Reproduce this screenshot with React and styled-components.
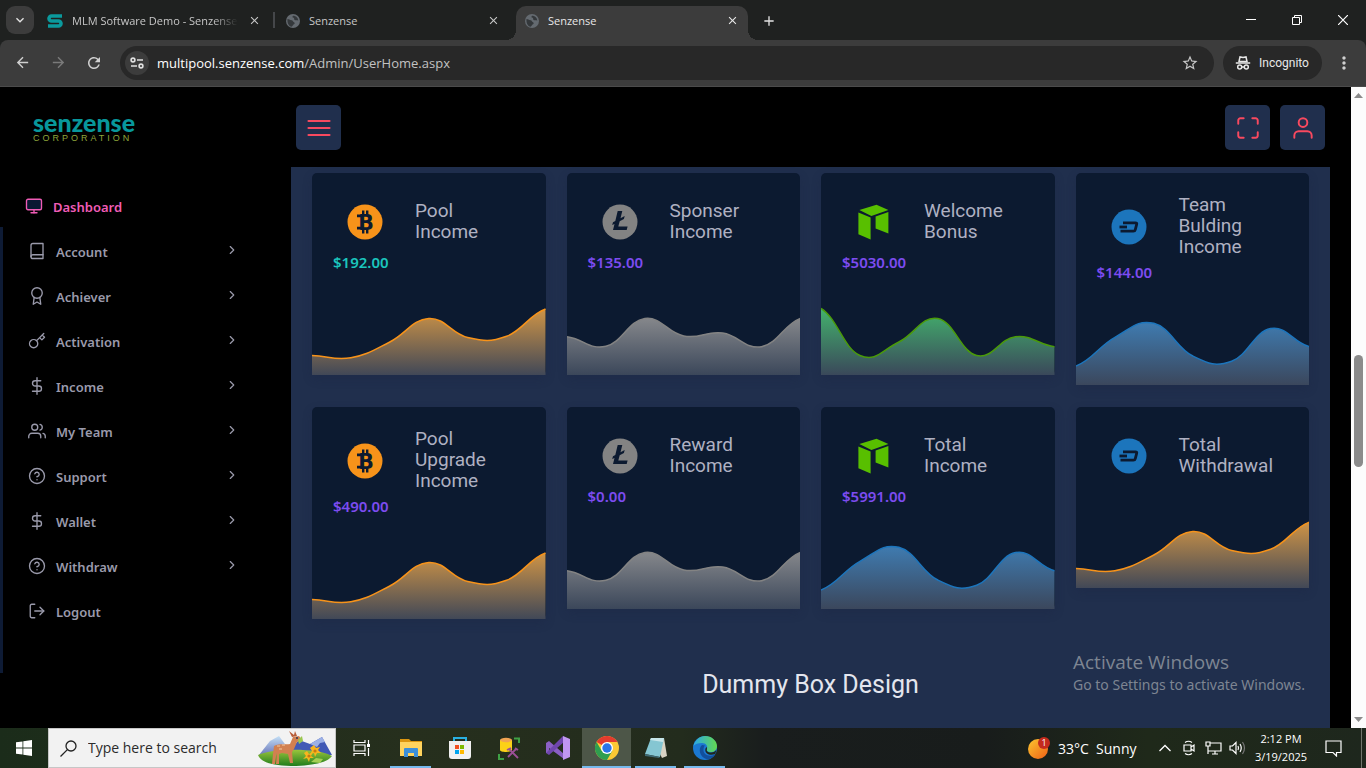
import React from 'react';
import styled, { createGlobalStyle } from 'styled-components';
import {
  FiAward, FiBook, FiChevronRight, FiDollarSign, FiHelpCircle, FiKey, FiLogOut,
  FiMaximize, FiMenu, FiMonitor, FiUser, FiUsers,
} from 'react-icons/fi';
import {
  MdArrowBack, MdArrowForward, MdRefresh, MdStarBorder, MdMoreVert, MdClose, MdAdd,
  MdKeyboardArrowDown,
} from 'react-icons/md';

const GlobalStyle = createGlobalStyle`
  * { box-sizing: border-box; }
  body { margin: 0; background: #000; font-family: 'Noto Sans', sans-serif; }
  button { border: 0; padding: 0; background: none; color: inherit; font: inherit; }
  a { color: inherit; text-decoration: none; }
  svg { display: block; flex: none; }
`;

const ui = "'Open Sans', 'Noto Sans', sans-serif";

const Screen = styled.div`
  height: 100vh;
  display: flex;
  flex-direction: column;
  overflow: hidden;
`;

/* ---------- browser ---------- */

const TabStrip = styled.div`
  height: 40px;
  flex: none;
  display: flex;
  align-items: flex-end;
  background: #1f2120;
  color: #e3e3e3;
  font: 11px/16px ${ui};
`;

const TabSearch = styled.button`
  width: 28px;
  height: 28px;
  margin: 6px 4px 6px 6px;
  border-radius: 9px;
  background: #3c3c3c;
  display: grid;
  place-items: center;
`;

const Tab = styled.div`
  width: 232px;
  height: 34px;
  margin-right: 7px;
  padding: 0 8px 5px 9px;
  display: flex;
  align-items: center;
  position: relative;
  color: ${(p) => (p.$active ? '#e8e8e8' : '#c7c7c7')};
  background: ${(p) => (p.$active ? '#3c3c3c' : 'transparent')};
  border-radius: 10px 10px 0 0;

  &::before, &::after {
    content: '';
    display: ${(p) => (p.$active ? 'block' : 'none')};
    position: absolute;
    bottom: 0;
    width: 10px;
    height: 10px;
  }
  &::before { left: -10px; background: radial-gradient(circle at 0 0, transparent 10px, #3c3c3c 10px); }
  &::after { right: -10px; background: radial-gradient(circle at 100% 0, transparent 10px, #3c3c3c 10px); }
`;

const TabTitle = styled.span`
  flex: 1;
  margin-left: 9px;
  overflow: hidden;
  white-space: nowrap;
  ${(p) => p.$fade && 'mask-image: linear-gradient(90deg, #000 85%, transparent);'}
`;

const TabClose = styled.button`
  width: 16px;
  height: 16px;
  margin-left: 8px;
  display: grid;
  place-items: center;
`;

const TabDivider = styled.div`
  width: 2px;
  height: 16px;
  margin: 0 0 12px -4px;
  background: #45474a;

  & + div { margin-left: 2px; }
`;

const NewTab = styled.button`
  width: 28px;
  height: 34px;
  padding-bottom: 5px;
  display: grid;
  place-items: center;
`;

const WindowButtons = styled.div`
  margin-left: auto;
  align-self: stretch;
  display: flex;
`;

const WindowButton = styled.button`
  width: 46px;
  display: grid;
  place-items: center;
`;

const ToolbarBack = styled.div`
  flex: none;
  background: #1f2120;
`;

const Toolbar = styled.div`
  height: 47px;
  padding: 0 8px 1px 8px;
  display: flex;
  align-items: center;
  background: #3c3c3c;
  border-bottom: 1px solid #4b4b4b;
  border-radius: 8px 8px 0 0;
  color: #c7c7c7;
`;

const NavButton = styled.button`
  width: 28px;
  height: 28px;
  margin-right: 8px;
  display: grid;
  place-items: center;
  color: ${(p) => (p.disabled ? '#7a7a7a' : '#d0d0d0')};

  &:last-child { margin-right: 0; }
`;

const Omnibox = styled.div`
  flex: 1;
  height: 34px;
  margin: 0 9px 0 4px;
  padding: 0 15px 0 5px;
  display: flex;
  align-items: center;
  background: #282828;
  border-radius: 17px;
`;

const SiteInfo = styled.button`
  width: 24px;
  height: 24px;
  border-radius: 12px;
  background: #3c3c3c;
  display: grid;
  place-items: center;
`;

const Address = styled.div`
  flex: 1;
  margin-left: 8px;
  color: #c2c2c2;
  font: 13px/20px ${ui};

  b { color: #fff; font-weight: 400; }
`;

const Incognito = styled.button`
  width: 99px;
  height: 34px;
  padding-left: 12px;
  margin-right: 8px;
  display: flex;
  align-items: center;
  gap: 8px;
  border-radius: 17px;
  background: #282828;
  color: #e8e8e8;
  font: 12px/18px Roboto, sans-serif;
`;

/* ---------- site ---------- */

const Viewport = styled.div`
  flex: 1;
  min-height: 0;
  display: flex;
  position: relative;
  background: #000;
`;

const Sidebar = styled.aside`
  width: 291px;
  flex: none;
`;

const Logo = styled.a`
  height: 98px;
  padding: 23px 0 0 33px;
  display: flex;
  flex-direction: column;
  color: #08979b;
  font: 900 25px/24px Lato, sans-serif;

  small {
    color: #8ea63c;
    font: 9px/8px 'Liberation Sans', sans-serif;
    letter-spacing: 3px;
  }
`;

const MenuLink = styled.a`
  height: 45px;
  padding: 0 52px 2px 25px;
  display: flex;
  align-items: center;
  color: ${(p) => (p.$active ? '#f05cb6' : '#9a9aab')};
  font: 600 13px/20px 'Noto Sans', sans-serif;

  svg { margin: 0 10px 2px 0; stroke-width: 1.8; }
  svg:last-child { margin: 0 0 3px auto; stroke-width: 2; }
`;

const MenuGroup = styled.nav`
  margin-top: -3px;
  padding: 3px 0 38px;
  border-left: 3px solid #0e1b35;
`;

const Main = styled.main`
  flex: 1;
  margin-right: 21px;
  display: flex;
  flex-direction: column;
`;

const TopBar = styled.header`
  height: 80px;
  flex: none;
  padding: 18px 5px;
  display: flex;
  gap: 10px;
`;

const SquareButton = styled.button`
  width: 45px;
  height: 45px;
  border-radius: 5px;
  background: #202f4d;
  color: #f9495f;
  display: grid;
  place-items: center;

  &:first-child { margin-right: auto; }
  svg { stroke-width: 1.8; }
`;

const Panel = styled.section`
  flex: 1;
  min-height: 0;
  padding: 6px 21px 0;
  background: #202f4d;
`;

const Cards = styled.div`
  display: grid;
  grid-template-columns: repeat(4, 1fr);
  gap: 22px 21px;
  align-items: start;
`;

const Card = styled.article`
  background: #0c1a30;
  border-radius: 5px;
  box-shadow: 0 4px 10px rgba(26, 38, 66, 0.3);
`;

const CardHead = styled.div`
  min-height: 77px;
  padding: 21px 21px 0 35px;
  display: flex;
  align-items: center;
  gap: 32px;
`;

const CardTitle = styled.h3`
  margin: 0;
  padding-bottom: 3px;
  flex: 1;
  color: #afb1c2;
  font: 400 19px/21px Roboto, sans-serif;
`;

const Amount = styled.p`
  margin: 2px 0 -2px;
  padding-left: 21px;
  color: ${(p) => p.$color};
  font: 600 15px/21px 'Noto Sans', sans-serif;
`;

const ChartBox = styled.div`
  margin-top: 4px;

  svg { width: 100%; height: 100px; }
`;

const SectionTitle = styled.h2`
  margin: 51px 0 0;
  text-align: center;
  color: #e4e6ee;
  font: 400 25px/30px Roboto, sans-serif;
`;

const Watermark = styled.div`
  position: absolute;
  right: 56px;
  bottom: 33px;
  width: 237px;
  color: #7d8592;
  font: 14px/20px 'Noto Sans', sans-serif;
  white-space: nowrap;

  strong { display: block; font: 400 19px/25px ${ui}; }
`;

const Scrollbar = styled.div`
  width: 15px;
  padding: 6px 0 6px;
  flex: none;
  display: flex;
  flex-direction: column;
  align-items: center;
  background: #fcfcfc;
`;

const Track = styled.div`
  flex: ${(p) => p.$size} 1 0;
`;

const Thumb = styled(Track)`
  width: 9px;
  border-radius: 5px;
  background: #8b8b8b;
`;

/* ---------- taskbar ---------- */

const Taskbar = styled.footer`
  height: 40px;
  flex: none;
  display: flex;
  background: linear-gradient(90deg, #1b2c1a 0, #262f1d 30%, #232c1d 50%, #191d1d 56%, #181c1b 72%, #1f291a 84%, #1e271d 100%);
  color: #fff;
  font-family: ${ui};
`;

const TaskButton = styled.button`
  width: ${(p) => p.$width || 49}px;
  position: relative;
  display: grid;
  place-items: center;
  background: ${(p) => (p.$on ? '#4d5648' : 'transparent')};

  &::after {
    content: '';
    display: ${(p) => (p.$open ? 'block' : 'none')};
    position: absolute;
    bottom: 0;
    left: ${(p) => (p.$on ? 0 : 4)}px;
    right: ${(p) => (p.$on ? 0 : 4)}px;
    height: 2px;
    background: #76b9ed;
  }
`;

const SearchBox = styled.label`
  width: 288px;
  margin-right: 1px;
  padding: 0 2px 0 11px;
  display: flex;
  align-items: center;
  background: #f2f2f2;
  border: 1px solid #c6c6c6;
`;

const SearchInput = styled.input`
  flex: 1;
  min-width: 0;
  margin-left: 11px;
  padding: 0;
  border: 0;
  outline: 0;
  background: none;
  font: 14px/20px ${ui};

  &::placeholder { color: #2b2b2b; opacity: 1; }
`;

const Tray = styled.div`
  margin-left: auto;
  display: flex;
  align-items: center;
`;

const Weather = styled.button`
  width: 125px;
  display: flex;
  align-items: center;
  gap: 6px;
  font-size: 14px;
  white-space: pre;
`;

const TrayButton = styled.button`
  width: 24px;
  display: grid;
  place-items: center;
`;

const Clock = styled.button`
  width: 64px;
  font-size: 11px;
  line-height: 18px;
`;

const Notifications = styled.button`
  width: 40px;
  height: 40px;
  display: grid;
  place-items: center;
`;

const ShowDesktop = styled.button`
  width: 5px;
  height: 40px;
  margin-left: 8px;
  border-left: 1px solid #70766d;
`;

/* ---------- drawings ---------- */

const Globe = () => (
  <svg width="14" height="14" viewBox="0 0 14 14">
    <circle cx="7" cy="7" r="7" fill="#646a70" />
    <path d="M1.500 5C3 5 4 6.500 6 6.200c1 .3.800 1.600 2 2 1 .5 1 1.800-.5 2.300-.8 1-1 1.800-2 2.300C3 12 1 9.500 1.500 5zM7 1.800c-1 1.200-.5 2.200.8 2 .8.800-.2 1.800 1.200 2.400 1.200.4 2.200-.2 3.200.6C12.300 4 10 1.800 7 1.800z" fill="#34383b" />
  </svg>
);

const SenzenseMark = () => (
  <svg width="16" height="14" viewBox="0 0 16 14">
    <path d="M15 2H4.500a2.400 2.400 0 0 0 0 5h7a2.400 2.400 0 0 1 0 5H1" fill="none" stroke="#0b9a9d" strokeWidth="3.600" />
  </svg>
);

const SiteInfoIcon = () => (
  <svg width="14" height="12" viewBox="0 0 14 12" fill="none" stroke="#e0e0e0" strokeWidth="1.600">
    <circle cx="3" cy="3" r="1.900" />
    <path d="M7 3h6M1 9h6" />
    <circle cx="11" cy="9" r="1.900" />
  </svg>
);

const IncognitoIcon = () => (
  <svg width="16" height="16" viewBox="0 0 16 16" fill="none" stroke="#e8e8e8" strokeWidth="1.500">
    <path d="M4 6.500 5 2l3 .6L11 2l1 4.500z" />
    <path d="M.8 8h14.400" />
    <circle cx="4.700" cy="12" r="2" />
    <circle cx="11.300" cy="12" r="2" />
    <path d="M6.700 12h2.600" />
  </svg>
);

const BitcoinIcon = () => (
  <svg width="36" height="36" viewBox="0 0 36 36">
    <circle cx="18" cy="18" r="17.500" fill="#f7931a" />
    <g fill="#0c1a30">
      <path d="M15 6.500h2.400V12H15zM19 6.500h2.400V12H19zM15 24h2.400v5.500H15zM19 24h2.400v5.500H19z" />
      <path d="M10 10.500h5v2.800h-5zM10 22.700h5v2.800h-5z" />
      <text x="19" y="25.500" textAnchor="middle" fontFamily="DejaVu Sans" fontWeight="700" fontSize="20.500">B</text>
    </g>
  </svg>
);

const LitecoinIcon = () => (
  <svg width="36" height="36" viewBox="0 0 36 36">
    <circle cx="18" cy="18" r="17.500" fill="#838383" />
    <path d="M15.700 7h4.600l-1.800 7.200 4.200-2.200-.8 3-4.200 2.200-1.400 5.300h9.300L24.700 26H11l1.500-6-2.300 1.100.8-2.900 2.300-1.200z" fill="#0c1a30" />
  </svg>
);

const NeoIcon = () => (
  <svg width="36" height="36" viewBox="0 0 36 36" fill="#58bf00">
    <path d="M3.400 6 20.500.8 32.400 6 15.400 12z" />
    <path d="M2.400 8.600 14.600 13.400V35.600L2.400 30.200z" />
    <path d="M19.600 12.400 32.400 8v21.600L19.600 24.400z" />
  </svg>
);

const DashIcon = () => (
  <svg width="36" height="36" viewBox="0 0 36 36">
    <circle cx="18" cy="18" r="17.500" fill="#1c75bc" />
    <g fill="none" stroke="#0c1a30" strokeWidth="2.800">
      <path d="M12 13.800h12.500q1.600 0 1.200 1.400l-1.400 5.400q-.4 1.600-2 1.600H9.500" />
      <path d="M8.500 18h7.500" />
    </g>
  </svg>
);

const StartIcon = () => (
  <svg width="16" height="16" viewBox="0 0 16 16" fill="#fff">
    <path d="M0 2.300 6.500 1.400v6.200H0zM7.300 1.300 16 0v7.600H7.300zM0 8.400h6.500v6.200L0 13.700zM7.300 8.400H16V16l-8.700-1.300z" />
  </svg>
);

const SearchIcon = () => (
  <svg width="17" height="17" viewBox="0 0 17 17" fill="none" stroke="#222" strokeWidth="1.300">
    <circle cx="11" cy="6" r="5" />
    <path d="M7.400 9.600.5 16.500" />
  </svg>
);

const DeerScene = () => (
  <svg width="76" height="38" viewBox="0 0 76 38">
    <defs>
      <linearGradient id="hill" x1="0" y1="0" x2="0" y2="1">
        <stop offset="0" stopColor="#9ac43c" />
        <stop offset="1" stopColor="#1f7d1d" />
      </linearGradient>
      <linearGradient id="peak" x1="0" y1="0" x2="0" y2="1">
        <stop offset="0" stopColor="#c4e0f6" />
        <stop offset="1" stopColor="#6b77ba" />
      </linearGradient>
    </defs>
    <path d="M2 26 13 12l9-5 14 19z" fill="url(#peak)" />
    <path d="M28 26 42 11l11 4 12-7 10 18z" fill="#4159b5" />
    <path d="m53 15 12-7 3 5-5 1-3 4z" fill="#9cb1e6" />
    <path d="M1 26c16-7 60-7 74 1-4 6-16 9-36 10C17 37 4 34 1 26z" fill="url(#hill)" />
    <path d="M17 17c6-3 12-1 16-2l3-7 6-1 3 4-5 2-3 7-2 3 1 11h-3l-2-9-6-1-3 1 0 10h-3l1-11-1 3-1 8h-3l1-10z" fill="#d28050" />
    <path d="m35 8-3-6 5 4 1-4 2 5z" fill="#b85e3b" />
    <path d="M20 17h3M25 16h3M22 20h3" stroke="#f2c9a0" />
    <circle cx="40" cy="9" r="1" fill="#2b3454" />
    <path d="m41 11 4-4 1 5-4 3z" fill="#9ac750" />
    <g fill="#f8b51e">
      <path d="m50 22 2 3 4-2-2 4 3 2-4 0-1 4-2-4-4 1 3-3-2-3z" />
      <path d="m57 16 2 3 4-1-2 3 3 3-4 0-2 4-1-4-4 1 2-3-2-3z" />
    </g>
    <circle cx="52" cy="27" r="1.600" fill="#c87a12" />
    <circle cx="58" cy="22" r="1.600" fill="#c87a12" />
    <path d="m54 33 5-4 7 1-3 4z" fill="#a4cf55" />
  </svg>
);

const TaskViewIcon = () => (
  <svg width="18" height="16" viewBox="0 0 18 16" fill="none" stroke="#fff" strokeWidth="1.200">
    <path d="M1 0v2.500h11V0M1 16v-2.500h11V16M1 5h11v6H1zM15.500 0v4M15.500 8v8" />
    <path d="M14 4h3v3h-3z" fill="#fff" stroke="none" />
  </svg>
);

const ExplorerIcon = () => (
  <svg width="22" height="20" viewBox="0 0 22 20">
    <path d="M0 1h9l2 2h11v3H0z" fill="#dc9610" />
    <path d="M0 4h22v14H0z" fill="#ffd35e" />
    <path d="M4 19v-8q0-1 1-1h12q1 0 1 1v8h-4v-4H8v4z" fill="#3c8fd9" />
  </svg>
);

const StoreIcon = () => (
  <svg width="24" height="24" viewBox="0 0 24 24">
    <path d="M6 6V2h12v4" fill="none" stroke="#29b0e2" strokeWidth="2" />
    <path d="M1 5h22v15q0 3-3 3H4q-3 0-3-3z" fill="#f1f1f1" />
    <path d="M7 9h4v4H7z" fill="#f25022" />
    <path d="M12 9h4v4h-4z" fill="#7fba00" />
    <path d="M7 14h4v4H7z" fill="#00a4ef" />
    <path d="M12 14h4v4h-4z" fill="#ffb900" />
  </svg>
);

const SqlIcon = () => (
  <svg width="22" height="23" viewBox="0 0 22 23">
    <path d="M2 3v10c0 2.600 12 2.600 12 0V3z" fill="#fcd116" />
    <ellipse cx="8" cy="3" rx="6" ry="2.200" fill="#f0a452" />
    <path d="M16 1.500h5V6M1 17v5h5" fill="none" stroke="#3fa045" strokeWidth="2" />
    <path d="m10 20 8-8M11 12l9 9M9 13l4-2M17 11l3 2" stroke="#9b4f96" strokeWidth="1.800" />
  </svg>
);

const VisualStudioIcon = () => (
  <svg width="24" height="24" viewBox="0 0 24 24">
    <path d="m0 7 3-2L18 18v5L3 12v5l-3 0z" fill="#8a5fc4" />
    <path d="M0 17 17 0l1 6L3 19z" fill="#6f46ad" />
    <path d="m17 0 7 3v18l-7 3z" fill="#c196f2" />
  </svg>
);

const ChromeIcon = () => (
  <svg width="24" height="24" viewBox="0 0 24 24">
    <circle cx="12" cy="12" r="12" fill="#fcc934" />
    <path d="M12 12 1.600 6A12 12 0 0 1 22.400 6H12z" fill="#e33b2e" />
    <path d="M1.600 6A12 12 0 0 0 12 24l5.200-9L12 12 6.800 15z" fill="#2f9e4f" />
    <circle cx="12" cy="12" r="6" fill="#fff" />
    <circle cx="12" cy="12" r="4.700" fill="#2a74e8" />
  </svg>
);

const NotepadIcon = () => (
  <svg width="24" height="22" viewBox="0 0 24 22">
    <path d="M8 1h12l3 18-5 2z" fill="#d9d4c4" />
    <path d="M7 1h13l-4 19-15-3z" fill="#85c6d2" />
    <path d="M7 1h13l-1 4-13-2z" fill="#c7e6ea" />
    <path d="m1 17 15 3-1 1-14-2z" fill="#3f6a74" />
  </svg>
);

const EdgeIcon = () => (
  <svg width="24" height="24" viewBox="0 0 24 24">
    <defs>
      <linearGradient id="edgeTop">
        <stop offset="0" stopColor="#2aa7e8" />
        <stop offset="1" stopColor="#63d94f" />
      </linearGradient>
    </defs>
    <circle cx="12" cy="12" r="12" fill="#1b78d1" />
    <path d="M.4 10C2 4 7 0 12 0c7 0 12 5 12 10 0 4-3 6-6 6-3 0-5-1-4-3 1-3-1-6-5-6-4 0-7 1-8.600 3z" fill="url(#edgeTop)" />
    <path d="M9 9c-4 3-3 13 6 14.500 3-.5 6-3 7-5-6 3-12 0-11.500-5 0-2 .5-3 1.500-4z" fill="#124f9c" />
    <path d="M14 13c-1 2 1 3.500 4 3.500 2 0 4-.8 5.300-2.500l-1 4c-5 2-10 0-10-4 0-1.500.5-2.500 1.500-3z" fill="#20271f" />
  </svg>
);

const SunIcon = () => (
  <svg width="24" height="24" viewBox="0 0 24 24">
    <defs>
      <linearGradient id="sun" x1="0" y1="0" x2="1" y2="1">
        <stop offset="0" stopColor="#fcc62f" />
        <stop offset="1" stopColor="#ef5f16" />
      </linearGradient>
    </defs>
    <circle cx="10" cy="13" r="10" fill="url(#sun)" />
    <circle cx="16" cy="7" r="6" fill="#c42b1c" />
    <text x="16" y="10" textAnchor="middle" fontSize="9" fill="#fff">1</text>
  </svg>
);

const STEP = 39;
const TENSION = 0.42;

/* Smooth curve through evenly spaced values, as cubic beziers. */
const smooth = (values) => {
  const reach = STEP * TENSION;
  const lift = values.map((v, i) => {
    const before = values[i - 1] ?? v;
    const after = values[i + 1] ?? v;
    return ((after - before) / 2) * TENSION;
  });
  return values.slice(1).reduce((d, v, i) => {
    const x = i * STEP;
    return `${d}C${x + reach} ${values[i] + lift[i]} ${x + STEP - reach} ${v - lift[i + 1]} ${x + STEP} ${v}`;
  }, `M0 ${values[0]}`);
};

const series = {
  orange: { line: '#f7931a', from: '#cf9446', to: '#414857', values: [80.5, 82.7, 67, 43.5, 62.5, 61.3, 34] },
  gray: { line: '#838383', from: '#85878b', to: '#3b475a', values: [61.7, 71.3, 43.5, 61, 58, 71.7, 43.3] },
  green: { line: '#4a9a0a', from: '#43b26d', to: '#3a485a', values: [33.3, 80.5, 67, 43.5, 80.5, 61.7, 71.7] },
  blue: { line: '#1c75bc', from: '#3f7bb0', to: '#3b475c', values: [81, 52.3, 38.3, 71, 76.3, 43.5, 61.7] },
};

const Chart = ({ kind }) => {
  const { line, from, to, values } = series[kind];
  const curve = smooth(values);
  return (
    <ChartBox>
      <svg viewBox="0 0 234 100" preserveAspectRatio="none">
        <defs>
          <linearGradient id={kind} x1="0" y1="0" x2="0" y2="1">
            <stop offset="0" stopColor={from} />
            <stop offset="1" stopColor={to} />
          </linearGradient>
        </defs>
        <path d={`${curve}V100H0Z`} fill={`url(#${kind})`} />
        <path d={curve} fill="none" stroke={line} strokeWidth="1.500" />
      </svg>
    </ChartBox>
  );
};

/* ---------- data ---------- */

const menu = [
  ['Account', FiBook],
  ['Achiever', FiAward],
  ['Activation', FiKey],
  ['Income', FiDollarSign],
  ['My Team', FiUsers],
  ['Support', FiHelpCircle],
  ['Wallet', FiDollarSign],
  ['Withdraw', FiHelpCircle],
];

const cards = [
  { title: ['Pool', 'Income'], amount: '$192.00', color: '#1bc5bd', icon: BitcoinIcon, chart: 'orange' },
  { title: ['Sponser', 'Income'], amount: '$135.00', icon: LitecoinIcon, chart: 'gray' },
  { title: ['Welcome', 'Bonus'], amount: '$5030.00', icon: NeoIcon, chart: 'green' },
  { title: ['Team', 'Bulding', 'Income'], amount: '$144.00', icon: DashIcon, chart: 'blue' },
  { title: ['Pool', 'Upgrade', 'Income'], amount: '$490.00', icon: BitcoinIcon, chart: 'orange' },
  { title: ['Reward', 'Income'], amount: '$0.00', icon: LitecoinIcon, chart: 'gray' },
  { title: ['Total', 'Income'], amount: '$5991.00', icon: NeoIcon, chart: 'blue' },
  { title: ['Total', 'Withdrawal'], icon: DashIcon, chart: 'orange' },
];

const tasks = [
  ['Task View', TaskViewIcon],
  ['File Explorer', ExplorerIcon, true],
  ['Microsoft Store', StoreIcon],
  ['SQL Server', SqlIcon],
  ['Visual Studio', VisualStudioIcon],
  ['Chrome', ChromeIcon, true, true],
  ['Notepad', NotepadIcon, true],
  ['Edge', EdgeIcon, true],
];

const Browser = () => (
  <>
    <TabStrip>
      <TabSearch aria-label="Search tabs"><MdKeyboardArrowDown size={16} /></TabSearch>
      <Tab>
        <SenzenseMark />
        <TabTitle $fade>MLM Software Demo - Senzense</TabTitle>
        <TabClose aria-label="Close tab"><MdClose size={13} /></TabClose>
      </Tab>
      <TabDivider />
      <Tab>
        <Globe />
        <TabTitle>Senzense</TabTitle>
        <TabClose aria-label="Close tab"><MdClose size={13} /></TabClose>
      </Tab>
      <Tab $active>
        <Globe />
        <TabTitle>Senzense</TabTitle>
        <TabClose aria-label="Close tab"><MdClose size={13} /></TabClose>
      </Tab>
      <NewTab aria-label="New tab"><MdAdd size={16} /></NewTab>
      <WindowButtons>
        <WindowButton aria-label="Minimize">
          <svg width="10" height="10" viewBox="0 0 10 10"><path d="M0 4.500h10" stroke="#fff" /></svg>
        </WindowButton>
        <WindowButton aria-label="Restore">
          <svg width="10" height="10" viewBox="0 0 10 10" fill="none" stroke="#fff"><path d="M.5 2.500h7v7h-7zM2.500 2.500v-2h7v7h-2" /></svg>
        </WindowButton>
        <WindowButton aria-label="Close">
          <svg width="10" height="10" viewBox="0 0 10 10"><path d="m0 0 10 10M10 0 0 10" stroke="#fff" strokeWidth="1.200" /></svg>
        </WindowButton>
      </WindowButtons>
    </TabStrip>
    <ToolbarBack>
      <Toolbar>
        <NavButton aria-label="Back"><MdArrowBack size={17} /></NavButton>
        <NavButton aria-label="Forward" disabled><MdArrowForward size={17} /></NavButton>
        <NavButton aria-label="Reload"><MdRefresh size={18} /></NavButton>
        <Omnibox>
          <SiteInfo aria-label="Site information"><SiteInfoIcon /></SiteInfo>
          <Address><b>multipool.senzense.com</b>/Admin/UserHome.aspx</Address>
          <MdStarBorder size={18} />
        </Omnibox>
        <Incognito><IncognitoIcon />Incognito</Incognito>
        <NavButton aria-label="Menu"><MdMoreVert size={20} /></NavButton>
      </Toolbar>
    </ToolbarBack>
  </>
);

const Site = () => (
  <Viewport>
    <Sidebar>
      <Logo href="#">
        senzense
        <small>CORPORATION</small>
      </Logo>
      <MenuLink href="#" $active><FiMonitor size={18} fill="#0a1833" /><span>Dashboard</span></MenuLink>
      <MenuGroup>
        {menu.map(([label, Icon]) => (
          <MenuLink href="#" key={label}>
            <Icon size={18} />
            <span>{label}</span>
            <FiChevronRight size={14} />
          </MenuLink>
        ))}
        <MenuLink href="#"><FiLogOut size={18} /><span>Logout</span></MenuLink>
      </MenuGroup>
    </Sidebar>
    <Main>
      <TopBar>
        <SquareButton aria-label="Toggle menu"><FiMenu size={28} /></SquareButton>
        <SquareButton aria-label="Full screen"><FiMaximize size={26} /></SquareButton>
        <SquareButton aria-label="Profile"><FiUser size={26} /></SquareButton>
      </TopBar>
      <Panel>
        <Cards>
          {cards.map(({ title, amount, color = '#7d4cf0', icon: Icon, chart }) => (
            <Card key={title.join(' ')}>
              <CardHead>
                <Icon />
                <CardTitle>
                  {title.map((word) => <React.Fragment key={word}>{word}<br /></React.Fragment>)}
                </CardTitle>
              </CardHead>
              {amount && <Amount $color={color}>{amount}</Amount>}
              <Chart kind={chart} />
            </Card>
          ))}
        </Cards>
        <SectionTitle>Dummy Box Design</SectionTitle>
      </Panel>
    </Main>
    <Scrollbar>
      <svg width="9" height="5" viewBox="0 0 9 5" fill="#8b8b8b"><path d="M0 5 4.500 0 9 5z" /></svg>
      <Track $size={257} />
      <Thumb $size={111} />
      <Track $size={250} />
      <svg width="9" height="5" viewBox="0 0 9 5" fill="#8b8b8b"><path d="M0 0h9L4.500 5z" /></svg>
    </Scrollbar>
    <Watermark>
      <strong>Activate Windows</strong>
      Go to Settings to activate Windows.
    </Watermark>
  </Viewport>
);

const App = () => (
  <Screen>
    <GlobalStyle />
    <Browser />
    <Site />
    <Taskbar>
      <TaskButton $width={48} aria-label="Start"><StartIcon /></TaskButton>
      <SearchBox>
        <SearchIcon />
        <SearchInput aria-label="Search" placeholder="Type here to search" />
        <DeerScene />
      </SearchBox>
      {tasks.map(([label, Icon, open, on]) => (
        <TaskButton key={label} aria-label={label} $open={open} $on={on}><Icon /></TaskButton>
      ))}
      <Tray>
        <Weather><SunIcon />33°C  Sunny</Weather>
        <TrayButton aria-label="Hidden icons">
          <svg width="12" height="8" viewBox="0 0 12 8" fill="none" stroke="#fff" strokeWidth="1.300"><path d="m.5 7 5.500-5.500L11.500 7" /></svg>
        </TrayButton>
        <TrayButton aria-label="Meet now">
          <svg width="12" height="16" viewBox="0 0 12 16" fill="none" stroke="#fff" strokeWidth="1.200"><path d="M1 5h7v6H1zM8 7l3-2v6L8 9M2 2.500q3.500-2.500 7 0M2 13.500q3.500 2.500 7 0" /></svg>
        </TrayButton>
        <TrayButton aria-label="Network">
          <svg width="17" height="14" viewBox="0 0 17 14" fill="none" stroke="#fff" strokeWidth="1.200"><path d="M5 2h11v8H3.500M1 1h4v4H1zM3 5v8M10 10v3M7 13h6" /></svg>
        </TrayButton>
        <TrayButton aria-label="Volume">
          <svg width="17" height="14" viewBox="0 0 17 14" fill="none" stroke="#fff" strokeWidth="1.200"><path d="M1 5h2.500L7 1.500v11L3.500 9H1zM9 5q1 2 0 4M11 3q2.500 4 0 8" /><path d="M13.500 1q4 6 0 12" stroke="#777" /></svg>
        </TrayButton>
        <Clock>2:12 PM<br />3/19/2025</Clock>
        <Notifications aria-label="Notifications">
          <svg width="17" height="17" viewBox="0 0 17 17" fill="none" stroke="#fff" strokeWidth="1.200"><path d="M1 1h15v11.500h-4.500V16L8 12.500H1z" /></svg>
        </Notifications>
        <ShowDesktop aria-label="Show desktop" />
      </Tray>
    </Taskbar>
  </Screen>
);

export default App;
